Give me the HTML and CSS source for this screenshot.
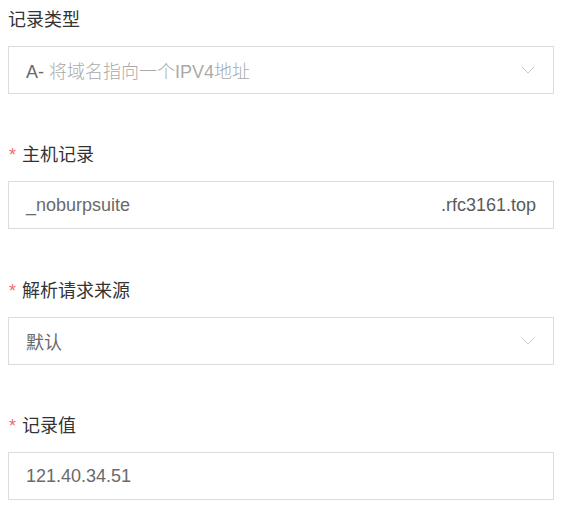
FILE: index.html
```html
<!DOCTYPE html>
<html lang="zh-CN">

<head>
    <meta charset="UTF-8">
    <meta name="viewport" content="width=device-width, initial-scale=1.0">
    <title>添加记录</title>
    <link rel="stylesheet" href="styles.css">
</head>

<body>
    <form class="record-form">
        <div class="form-item">
            <label class="form-label">记录类型</label>
            <div class="form-box select">
                <span class="value placeholder"><span class="dark">A-</span> 将域名指向一个IPV4地址</span>
                <svg class="arrow" width="14" height="8" viewBox="0 0 14 8"><path d="M1 1 L7 7 L13 1" fill="none" stroke="#c8c8c8" stroke-width="1"/></svg>
            </div>
        </div>
        <div class="form-item">
            <label class="form-label"><span class="star">*</span>主机记录</label>
            <div class="form-box">
                <span class="value">_noburpsuite</span>
                <span class="suffix">.rfc3161.top</span>
            </div>
        </div>
        <div class="form-item">
            <label class="form-label"><span class="star">*</span>解析请求来源</label>
            <div class="form-box select">
                <span class="value">默认</span>
                <svg class="arrow" width="14" height="8" viewBox="0 0 14 8"><path d="M1 1 L7 7 L13 1" fill="none" stroke="#c8c8c8" stroke-width="1"/></svg>
            </div>
        </div>
        <div class="form-item">
            <label class="form-label"><span class="star">*</span>记录值</label>
            <div class="form-box">
                <span class="value">121.40.34.51</span>
            </div>
        </div>
    </form>
</body>

</html>
```
FILE: styles.css
```css
* {
    margin: 0;
    padding: 0;
    box-sizing: border-box;
}
body {
    padding: 8px;
    font-family: "Liberation Sans", "Noto Sans CJK SC", sans-serif;
    font-size: 18px;
    color: #333;
    background: #fff;
}
.record-form {
    width: 546px;
}
.form-item {
    margin-bottom: 49px;
}
.form-item:last-child {
    margin-bottom: 0;
}
.form-item:nth-child(2) {
    margin-bottom: 50px;
}
.form-label {
    display: flex;
    align-items: center;
    height: 24px;
    line-height: 24px;
    margin-bottom: 14px;
    color: #333;
}
.star {
    color: #f56c6c;
    font-size: 18px;
    font-weight: 300;
    margin: 0 6px 0 1px;
}
.form-box {
    display: flex;
    align-items: center;
    justify-content: space-between;
    height: 48px;
    padding: 0 17px;
    border: 1px solid #dcdcdc;
    background: #fff;
}
.value {
    color: #6a6a6a;
}
.placeholder {
    color: #aaa;
    font-weight: 300;
}
.placeholder .dark {
    color: #6a6a6a;
    font-weight: 400;
}
.suffix {
    color: #5a5a5a;
}
.arrow {
    margin-right: 1px;
}
```
